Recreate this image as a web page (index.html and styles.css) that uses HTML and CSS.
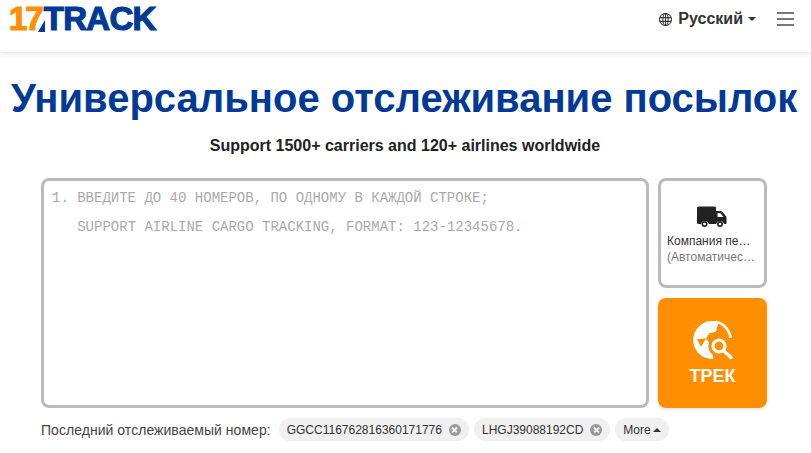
FILE: index.html
```html
<!DOCTYPE html>
<html lang="ru">
<head>
    <meta charset="UTF-8">
    <meta name="viewport" content="width=device-width, initial-scale=1.0">
    <title>17TRACK</title>
    <link rel="stylesheet" href="styles.css">
</head>
<body>
    <header class="site-header">
        <a class="logo"><span class="logo-num">17</span><span class="logo-slash"></span><span class="logo-name">TRACK</span></a>
        <div class="header-right">
            <a class="lang">
                <svg class="lang-icon" viewBox="0 0 16 16" fill="none" stroke="#333" stroke-width="1.1">
                    <circle cx="8" cy="8" r="6.4"/>
                    <ellipse cx="8" cy="8" rx="2.8" ry="6.4"/>
                    <path d="M1.8 6h12.4M1.8 10h12.4M8 1.6v12.8"/>
                </svg>
                <span>Русский</span>
                <span class="caret-down"></span>
            </a>
            <div class="burger"><span></span><span></span><span></span></div>
        </div>
    </header>
    <main class="main-content">
        <h1 class="title">Универсальное отслеживание посылок</h1>
        <p class="subtitle">Support 1500+ carriers and 120+ airlines worldwide</p>
        <div class="tracker">
            <textarea class="numbers" placeholder="1. ВВЕДИТЕ ДО 40 НОМЕРОВ, ПО ОДНОМУ В КАЖДОЙ СТРОКЕ;
   SUPPORT AIRLINE CARGO TRACKING, FORMAT: 123-12345678."></textarea>
            <div class="side">
                <div class="carrier">
                    <svg class="truck" viewBox="0 0 30 22">
                        <path fill="#222" d="M0 2A1.500 1.500 0 0 1 1.500 .5h16A1.500 1.500 0 0 1 19 2v3h4.800c.5 0 .9.2 1.200.6l4.200 5c.2.300.3.600.3.900V17a1 1 0 0 1-1 1h-1.500a4 4 0 0 0-7.800 0h-7.400a4 4 0 0 0-7.800 0H1.500A1.500 1.500 0 0 1 0 16.500z"/>
                        <path fill="#fff" d="M20.500 7h2.800l3.200 4h-6z"/>
                        <circle cx="7.500" cy="18" r="3" fill="#222"/>
                        <circle cx="7.500" cy="18" r="1.300" fill="#fff"/>
                        <circle cx="23" cy="18" r="3" fill="#222"/>
                        <circle cx="23" cy="18" r="1.300" fill="#fff"/>
                    </svg>
                    <div class="carrier-name">Компания перевозчика</div>
                    <div class="carrier-auto">(Автоматическое определение)</div>
                </div>
                <button class="track-button">
                    <svg class="track-icon" viewBox="0 0 42 42" fill="none">
                        <path fill="#fff" d="M26.500 2.100A19 19 0 1 0 21 39v-4c-4-2.500-5.500-7.500-4-12.500l-3-4 3.300-5.200 6.700-1.600z"/>
                        <path fill="#ff8f00" d="M5 19l9-.5-5 8.500z"/>
                        <path stroke="#fff" stroke-width="2.600" d="M24 1.700a19 19 0 0 1 14.600 16.300"/>
                        <circle cx="27" cy="26" r="9" fill="#ff8f00"/>
                        <circle cx="27" cy="26" r="6" stroke="#fff" stroke-width="3.200"/>
                        <path stroke="#fff" stroke-width="3.400" stroke-linecap="round" d="M32 31l7 6.500"/>
                    </svg>
                    <span>ТРЕК</span>
                </button>
            </div>
        </div>
        <div class="recent">
            <span class="recent-label">Последний отслеживаемый номер:</span>
            <span class="chip">GGCC116762816360171776<span class="chip-close"></span></span>
            <span class="chip">LHGJ39088192CD<span class="chip-close"></span></span>
            <span class="chip">More<span class="caret-up"></span></span>
        </div>
    </main>
</body>
</html>
```
FILE: styles.css
```css
html, body {
    margin: 0;
    padding: 0;
    height: 100%;
    overflow: hidden;
    background: #fff;
    font-family: "Liberation Sans", Arial, sans-serif;
    color: #222;
}
.site-header {
    height: 52px;
    box-sizing: border-box;
    display: flex;
    justify-content: space-between;
    align-items: flex-start;
    padding: 0 17px 0 9px;
    background: #fff;
    box-shadow: 0 1px 6px rgba(0, 0, 0, 0.13);
}
.logo {
    display: flex;
    align-items: center;
    height: 38px;
    font-size: 33px;
    font-weight: 700;
    line-height: 38px;
    letter-spacing: -0.7px;
    -webkit-text-stroke: 1.2px currentColor;
}
.logo-num {
    color: #ff8f00;
    letter-spacing: -2px;
}
.logo-slash {
    width: 0;
    height: 0;
    margin: 13px -1px 0 -4px;
    border-bottom: 12px solid #003a96;
    border-left: 7px solid transparent;
}
.logo-name {
    color: #003a96;
}
.header-right {
    display: flex;
    align-items: center;
    gap: 21px;
    height: 38px;
}
.lang {
    display: flex;
    align-items: center;
    font-size: 16px;
    font-weight: 700;
    color: #333;
}
.lang-icon {
    width: 15px;
    height: 15px;
    margin-right: 5px;
}
.caret-down {
    width: 0;
    height: 0;
    margin-left: 5px;
    border-top: 4px solid #333;
    border-left: 4px solid transparent;
    border-right: 4px solid transparent;
}
.burger {
    display: flex;
    flex-direction: column;
    gap: 4px;
    width: 17px;
}
.burger span {
    height: 2px;
    background: #777;
}
.main-content {
    padding: 0 44px 0 41px;
    display: flex;
    flex-direction: column;
}
.title {
    margin: 22px -30px 0;
    font-size: 40px;
    line-height: 48px;
    font-weight: 700;
    text-align: center;
    white-space: nowrap;
    color: #003a96;
}
.subtitle {
    margin: 12px 0 0;
    padding-left: 2px;
    font-size: 16px;
    line-height: 24px;
    font-weight: 700;
    text-align: center;
    color: #222;
}
.tracker {
    display: flex;
    gap: 9px;
    margin-top: 20px;
    height: 230px;
}
.numbers {
    flex: 1;
    box-sizing: border-box;
    margin: 0;
    padding: 3px 8px;
    border: 3px solid #bbb;
    border-radius: 8px;
    outline: none;
    resize: none;
    overflow: hidden;
    font-family: "Liberation Mono", "Courier New", monospace;
    font-size: 14px;
    line-height: 29px;
}
.numbers::placeholder {
    color: #aaa;
    opacity: 1;
}
.side {
    width: 109px;
    display: flex;
    flex-direction: column;
    gap: 10px;
}
.carrier {
    height: 110px;
    box-sizing: border-box;
    padding: 25px 8px 0 6px;
    border: 3px solid #bbb;
    border-radius: 8px;
    display: flex;
    flex-direction: column;
    font-size: 12px;
    line-height: 16px;
}
.truck {
    width: 30px;
    height: 22px;
    align-self: center;
    margin-bottom: 5px;
}
.carrier-name, .carrier-auto {
    overflow: hidden;
    white-space: nowrap;
    text-overflow: ellipsis;
}
.carrier-name {
    color: #333;
}
.carrier-auto {
    color: #777;
}
.track-button {
    height: 110px;
    padding: 0;
    border: none;
    border-radius: 8px;
    background: #ff8f00;
    color: #fff;
    display: flex;
    flex-direction: column;
    align-items: center;
    font-family: inherit;
    font-size: 18px;
    line-height: 20px;
    font-weight: 700;
    box-shadow: 0 1px 4px rgba(0, 0, 0, 0.12);
    cursor: pointer;
}
.track-icon {
    width: 42px;
    height: 42px;
    margin-top: 22px;
    margin-bottom: 4px;
}
.recent {
    display: flex;
    align-items: center;
    margin-top: 10px;
    font-size: 14px;
    letter-spacing: 0.04px;
    color: #444;
}
.recent-label {
    margin-right: 8px;
}
.chip {
    display: flex;
    align-items: center;
    height: 23px;
    padding: 0 8px;
    margin-right: 5px;
    border-radius: 12px;
    background: #f0f0f0;
    font-size: 12px;
    color: #333;
    letter-spacing: 0;
}
.chip-close {
    position: relative;
    width: 12px;
    height: 12px;
    margin-left: 7px;
    border-radius: 50%;
    background: #999;
}
.chip-close::before, .chip-close::after {
    content: "";
    position: absolute;
    left: 2.500px;
    top: 5.250px;
    width: 7px;
    height: 1.500px;
    background: #f0f0f0;
    transform: rotate(45deg);
}
.chip-close::after {
    transform: rotate(-45deg);
}
.caret-up {
    width: 0;
    height: 0;
    margin-left: 2px;
    border-bottom: 4px solid #333;
    border-left: 4px solid transparent;
    border-right: 4px solid transparent;
}
```
